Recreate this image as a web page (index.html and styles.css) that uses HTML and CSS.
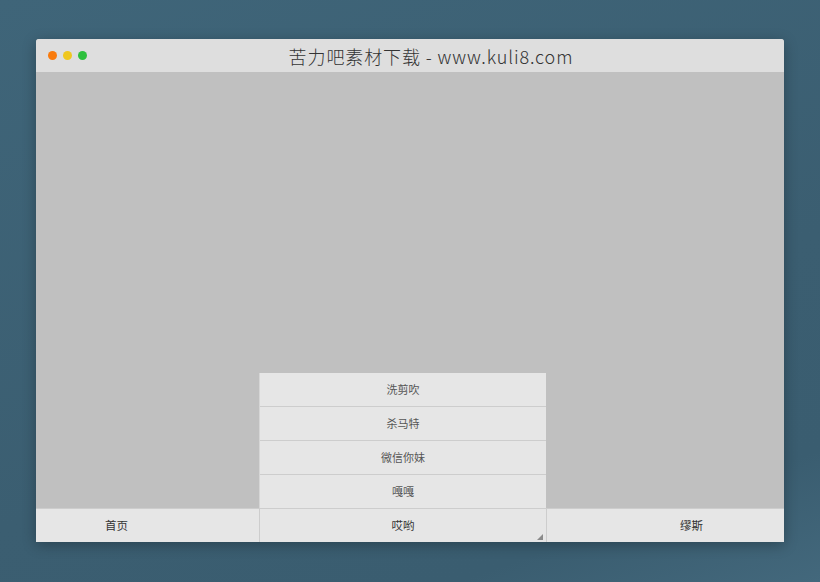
FILE: index.html
```html
<!DOCTYPE html>
<html lang="zh">
<head>
<meta charset="utf-8">
<title>苦力吧素材下载</title>
<link rel="stylesheet" href="styles.css">
</head>
<body>
<div class="window">
  <div class="titlebar">
    <div class="dots">
      <span class="dot dot-red"></span>
      <span class="dot dot-yellow"></span>
      <span class="dot dot-green"></span>
    </div>
    <div class="title">苦力吧素材下载 - www.kuli8.com</div>
  </div>
  <div class="content"></div>
  <div class="nav">
    <div class="nav-item nav-left">首页</div>
    <div class="nav-item nav-mid">
      哎哟
      <span class="grip"></span>
      <div class="menu">
        <div class="menu-item">洗剪吹</div>
        <div class="menu-item">杀马特</div>
        <div class="menu-item">微信你妹</div>
        <div class="menu-item">嘎嘎</div>
      </div>
    </div>
    <div class="nav-item nav-right">缪斯</div>
  </div>
</div>
</body>
</html>
```

FILE: styles.css
```css
html, body {
  margin: 0;
  padding: 0;
  height: 100%;
}
body {
  background: linear-gradient(160deg, #3f6579 0%, #3b5e71 60%, #3a5d70 85%, #43687c 100%);
  font-family: "Noto Sans CJK SC", "Noto Sans", sans-serif;
  padding-top: 39px;
  box-sizing: border-box;
}
.window {
  width: 748px;
  height: 503px;
  margin-left: 36px;
  display: flex;
  flex-direction: column;
  border-radius: 3px 3px 0 0;
  box-shadow: 0 3px 14px rgba(0, 0, 0, 0.28);
  background: #c0c0c0;
}
.titlebar {
  height: 33px;
  background: #dedede;
  border-radius: 3px 3px 0 0;
  display: flex;
  align-items: center;
  position: relative;
  flex: none;
}
.dots {
  display: flex;
  gap: 6px;
  padding-left: 12px;
  position: absolute;
  left: 0;
  top: 12px;
}
.dot {
  width: 9px;
  height: 9px;
  border-radius: 50%;
  display: block;
}
.dot-red { background: #f97b0d; }
.dot-yellow { background: #efc71f; }
.dot-green { background: #2ec03d; }
.title {
  flex: 1;
  text-align: center;
  padding-left: 42px;
  font-size: 18px;
  font-weight: 300;
  color: #333;
  line-height: 32px;
  letter-spacing: 0.9px;
}
.content {
  flex: 1;
  background: #c0c0c0;
}
.nav {
  flex: none;
  height: 33px;
  border-top: 1px solid #cdcdcd;
  background: #e6e6e6;
  display: grid;
  grid-template-columns: 224px 287px 1fr;
  font-size: 11.5px;
  color: #333;
}
.nav-item {
  line-height: 33px;
  position: relative;
}
.nav-left {
  padding-left: 69px;
  border-right: 1px solid #cdcdcd;
}
.nav-mid {
  text-align: center;
  border-right: 1px solid #cdcdcd;
}
.nav-right {
  padding-left: 133px;
}
.grip {
  position: absolute;
  right: 3px;
  bottom: 2px;
  width: 0;
  height: 0;
  border-left: 6px solid transparent;
  border-bottom: 6px solid #8a8a8a;
}
.menu {
  position: absolute;
  left: -1px;
  right: 0;
  bottom: calc(100% + 1px);
  background: #e6e6e6;
  border-left: 1px solid #d6d6d6;
}
.menu-item {
  height: 33px;
  line-height: 33px;
  border-bottom: 1px solid #cdcdcd;
  text-align: center;
  font-size: 11px;
  color: #555;
}
.menu-item:last-child {
  border-bottom: none;
}
```
